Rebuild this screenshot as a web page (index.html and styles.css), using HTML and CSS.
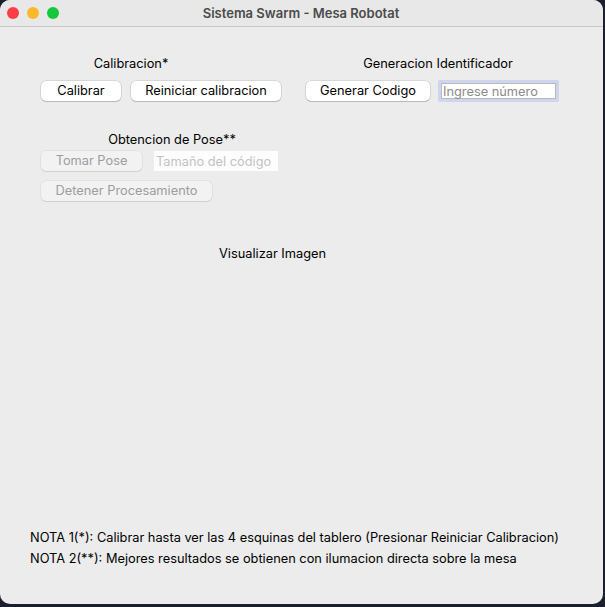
FILE: index.html
```html
<!DOCTYPE html>
<html lang="es">
<head>
<meta charset="utf-8">
<title>Sistema Swarm - Mesa Robotat</title>
<link rel="stylesheet" href="styles.css">
</head>
<body>
<div class="window">
  <div class="titlebar">
    <div class="lights">
      <span class="light red"></span>
      <span class="light yellow"></span>
      <span class="light green"></span>
    </div>
    <div class="title">Sistema Swarm - Mesa Robotat</div>
  </div>
  <div class="content">
    <div class="label-row">
      <div class="label lbl-calib">Calibracion*</div>
      <div class="label lbl-gen">Generacion Identificador</div>
    </div>
    <div class="row row-1">
      <button class="btn w-calibrar">Calibrar</button>
      <button class="btn w-reiniciar">Reiniciar calibracion</button>
      <button class="btn w-generar">Generar Codigo</button>
      <div class="focus-ring"><input class="entry entry-num" type="text" placeholder="Ingrese número"></div>
    </div>
    <div class="label-row second">
      <div class="label lbl-pose">Obtencion de Pose**</div>
    </div>
    <div class="row row-2">
      <button class="btn disabled w-tomar" disabled>Tomar Pose</button>
      <input class="entry entry-disabled" type="text" placeholder="Tamaño del código" disabled>
    </div>
    <div class="row row-3">
      <button class="btn disabled w-detener" disabled>Detener Procesamiento</button>
    </div>
    <div class="visualizar">Visualizar Imagen</div>
    <div class="notes">
      <p>NOTA 1(*): Calibrar hasta ver las 4 esquinas del tablero (Presionar Reiniciar Calibracion)</p>
      <p>NOTA 2(**): Mejores resultados se obtienen con ilumacion directa sobre la mesa</p>
    </div>
  </div>
</div>
</body>
</html>
```

FILE: styles.css
```css
html, body {
  margin: 0;
  padding: 0;
}
body {
  width: 605px;
  height: 607px;
  background: #1b212c;
  font-family: Inter, "Liberation Sans", Arial, sans-serif;
  font-size: 12.8px;
  color: #000;
  overflow: hidden;
}
.window {
  width: 603px;
  height: 604px;
  background: #ececec;
  border-radius: 10px;
  overflow: hidden;
  display: flex;
  flex-direction: column;
}
.titlebar {
  height: 26px;
  flex: none;
  background: #e8e8e8;
  border-bottom: 1px solid #c8c8c8;
  display: flex;
  align-items: center;
}
.lights {
  display: flex;
  gap: 8px;
  padding-left: 7px;
}
.light {
  width: 12px;
  height: 12px;
  border-radius: 50%;
  display: block;
}
.red { background: #fe3d45; }
.yellow { background: #fdb72a; }
.green { background: #15c73b; }
.title {
  flex: 1;
  text-align: center;
  font-weight: 600;
  font-size: 13px;
  color: #4b4b4b;
  margin-left: -60px;
}
.content {
  flex: 1;
  display: flex;
  flex-direction: column;
  padding-top: 29px;
}
.label-row {
  display: flex;
  height: 16px;
  line-height: 16px;
  padding-left: 41px;
}
.label {
  text-align: center;
}
.lbl-calib { width: 180px; }
.lbl-gen { width: 200px; margin-left: 117px; }
.lbl-pose { width: 262px; }
.label-row.second { margin-top: 30px; }
.row {
  display: flex;
  align-items: center;
  padding-left: 41px;
}
.row-1 { margin-top: 8px; height: 22px; }
.row-2 { margin-top: 3px; height: 20px; }
.row-3 { margin-top: 10px; height: 20px; }
.btn {
  font-family: inherit;
  font-size: 12.8px;
  color: #000;
  height: 20px;
  background: #ffffff;
  border: none;
  border-radius: 5px;
  box-shadow: 0 0 0 0.5px rgba(0,0,0,0.18), 0 1px 1px rgba(0,0,0,0.14);
  padding: 0;
  text-align: center;
  line-height: 20px;
}
.btn.disabled {
  background: #f2f2f2;
  color: #9d9d9d;
  box-shadow: 0 0 0 0.5px rgba(0,0,0,0.08), 0 1px 1px rgba(0,0,0,0.08);
}
.w-calibrar { width: 80px; }
.w-reiniciar { width: 150px; margin-left: 10px; }
.w-generar { width: 124px; margin-left: 25px; }
.w-tomar { width: 101px; }
.w-detener { width: 171px; }
.focus-ring {
  margin-left: 8px;
  width: 115px;
  height: 16px;
  border: 3px solid #cdd5ef;
  border-radius: 2px;
  display: flex;
}
.entry {
  font-family: inherit;
  font-size: 12.8px;
  box-sizing: border-box;
  border: none;
  outline: none;
  padding: 0 2px;
  margin: 0;
  background: #fff;
}
.entry-num {
  width: 115px;
  height: 16px;
  box-shadow: inset 0 0 0 1px #b9b9b9;
}
.entry-num::placeholder { color: #8b8b8b; }
.entry-disabled {
  width: 124px;
  height: 20px;
  margin-left: 12px;
  background: #fdfdfd;
}
.entry-disabled::placeholder { color: #c3c3c3; }
.visualizar {
  margin-top: 45px;
  line-height: 16px;
  padding-left: 219px;
}
.notes {
  margin-top: auto;
  padding-left: 30px;
  padding-bottom: 35px;
}
.notes p {
  margin: 0;
  line-height: 21px;
}
```
